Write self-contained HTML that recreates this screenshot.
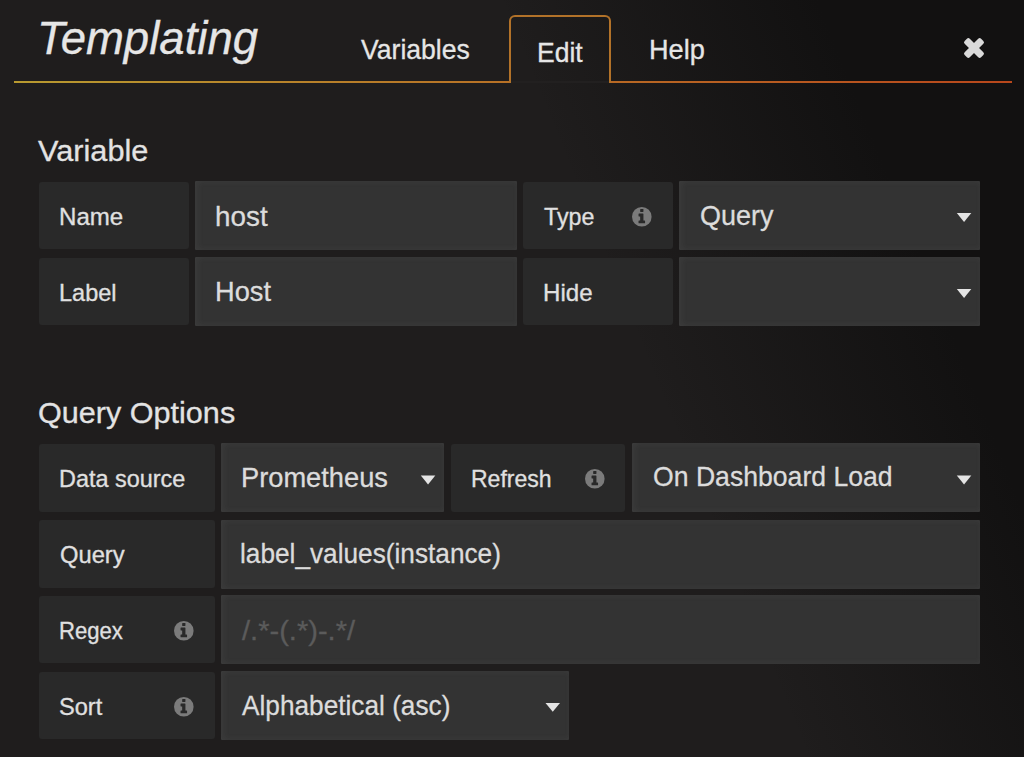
<!DOCTYPE html>
<html lang="en">
<head>
<meta charset="utf-8">
<title>Templating</title>
<style>
html,body{margin:0;padding:0;}
body{width:1024px;height:757px;overflow:hidden;position:relative;background-color:#1f1d1d;
 background-image:linear-gradient(68deg, rgba(18,17,17,0) 60.5%, rgba(18,17,17,1) 84.5%);
 font-family:"Liberation Sans",sans-serif;}
.t{position:absolute;white-space:nowrap;transform-origin:0 0;margin:0;padding:0;font-weight:400;-webkit-text-stroke:0.3px currentColor;}
.lb{position:absolute;background:#292929;border-radius:3px;}
.in{position:absolute;background:#333333;border-radius:1px;box-shadow:inset 2px 0 6px 0 rgba(150,150,150,0.10);}
.hl{position:absolute;left:13.5px;top:81px;width:998.5px;height:2px;background:linear-gradient(to right,#b89a30 0%,#b8481c 99%,#b8481c 100%);}
.tab{position:absolute;left:509px;top:15px;width:98px;height:66px;border:2px solid #b27229;border-bottom:0;border-radius:6px 6px 0 0;}
.tabc{position:absolute;left:511px;top:81px;width:98px;height:2px;background:#222020;}
svg{position:absolute;overflow:visible;}
</style>
</head>
<body>
<div class="hl"></div>
<div class="tab"></div>
<div class="tabc"></div>
<div class="lb" style="left:39px;top:182px;width:150px;height:67.3px"></div>
<div class="lb" style="left:39px;top:258px;width:150px;height:67.3px"></div>
<div class="lb" style="left:523.3px;top:182px;width:149.7px;height:67.3px"></div>
<div class="lb" style="left:523.3px;top:258px;width:149.7px;height:67.3px"></div>
<div class="lb" style="left:39px;top:444px;width:175.5px;height:67.5px"></div>
<div class="lb" style="left:450.7px;top:444px;width:174.7px;height:67.5px"></div>
<div class="lb" style="left:39px;top:520px;width:175.5px;height:67.6px"></div>
<div class="lb" style="left:39px;top:596px;width:175.5px;height:67.4px"></div>
<div class="lb" style="left:39px;top:672px;width:175.5px;height:67px"></div>
<div class="in" style="left:195px;top:181px;width:322px;height:69px"></div>
<div class="in" style="left:195px;top:257px;width:322px;height:69px"></div>
<div class="in" style="left:679px;top:181px;width:301px;height:69px"></div>
<div class="in" style="left:679px;top:257px;width:301px;height:69px"></div>
<div class="in" style="left:221px;top:443.4px;width:223px;height:69px"></div>
<div class="in" style="left:631.8px;top:443.4px;width:348.2px;height:69px"></div>
<div class="in" style="left:221px;top:519.5px;width:759px;height:69px"></div>
<div class="in" style="left:221px;top:595.3px;width:759px;height:68.7px"></div>
<div class="in" style="left:221px;top:670.8px;width:347.7px;height:68.8px"></div>
<svg width="1" height="1" style="left:0;top:0"><polygon points="956.8,213.1 971.3,213.1 964.05,222" fill="#e4e4e4"/></svg>
<svg width="1" height="1" style="left:0;top:0"><polygon points="956.8,289.1 971.3,289.1 964.05,298" fill="#e4e4e4"/></svg>
<svg width="1" height="1" style="left:0;top:0"><polygon points="420.8,475.5 435.3,475.5 428.05,484.4" fill="#e4e4e4"/></svg>
<svg width="1" height="1" style="left:0;top:0"><polygon points="956.8,475.5 971.3,475.5 964.05,484.4" fill="#e4e4e4"/></svg>
<svg width="1" height="1" style="left:0;top:0"><polygon points="545.5,702.9 560,702.9 552.75,711.8" fill="#e4e4e4"/></svg>
<svg width="1" height="1" style="left:632.2px;top:207px"><g transform="scale(0.01276)"><circle cx="768" cy="768" r="768" fill="#7b7b7b"/><g transform="translate(0,-128)"><rect x="640" y="288" width="256" height="224" rx="32" fill="#292929"/><path d="M544 640h320q32 0 32 32v512h96q32 0 32 32v160q0 32-32 32h-448q-32 0-32-32v-160q0-32 32-32h96v-320h-96q-32 0-32-32v-160q0-32 32-32z" fill="#292929"/></g></g></svg>
<svg width="1" height="1" style="left:585.4px;top:468.7px"><g transform="scale(0.01276)"><circle cx="768" cy="768" r="768" fill="#7b7b7b"/><g transform="translate(0,-128)"><rect x="640" y="288" width="256" height="224" rx="32" fill="#292929"/><path d="M544 640h320q32 0 32 32v512h96q32 0 32 32v160q0 32-32 32h-448q-32 0-32-32v-160q0-32 32-32h96v-320h-96q-32 0-32-32v-160q0-32 32-32z" fill="#292929"/></g></g></svg>
<svg width="1" height="1" style="left:173.9px;top:621.2px"><g transform="scale(0.01276)"><circle cx="768" cy="768" r="768" fill="#7b7b7b"/><g transform="translate(0,-128)"><rect x="640" y="288" width="256" height="224" rx="32" fill="#292929"/><path d="M544 640h320q32 0 32 32v512h96q32 0 32 32v160q0 32-32 32h-448q-32 0-32-32v-160q0-32 32-32h96v-320h-96q-32 0-32-32v-160q0-32 32-32z" fill="#292929"/></g></g></svg>
<svg width="1" height="1" style="left:173.9px;top:696.6px"><g transform="scale(0.01276)"><circle cx="768" cy="768" r="768" fill="#7b7b7b"/><g transform="translate(0,-128)"><rect x="640" y="288" width="256" height="224" rx="32" fill="#292929"/><path d="M544 640h320q32 0 32 32v512h96q32 0 32 32v160q0 32-32 32h-448q-32 0-32-32v-160q0-32 32-32h96v-320h-96q-32 0-32-32v-160q0-32 32-32z" fill="#292929"/></g></g></svg>
<svg width="1" height="1" style="left:974.3px;top:47.9px"><g transform="rotate(45)" fill="#dadada"><rect x="-11.6" y="-3.6" width="23.2" height="7.2" rx="2"/><rect x="-3.6" y="-11.6" width="7.2" height="23.2" rx="2"/></g></svg>
<div class="t" style="left:36.71px;top:12.2px;font-size:46.2px;line-height:52px;color:#e6e6e6;transform:scaleX(0.9857);font-style:italic;">Templating</div>
<div class="t" style="left:360.78px;top:34.4px;font-size:27.6px;line-height:31px;color:#e6e6e6;transform:scaleX(0.9633);">Variables</div>
<div class="t" style="left:537.11px;top:36.5px;font-size:27.6px;line-height:31px;color:#e6e6e6;transform:scaleX(0.9607);">Edit</div>
<div class="t" style="left:649px;top:34.4px;font-size:27.6px;line-height:31px;color:#e6e6e6;transform:scaleX(0.9845);">Help</div>
<div class="t" style="left:38.3px;top:133px;font-size:30.4px;line-height:34px;color:#e3e3e3;transform:scaleX(1.0102);">Variable</div>
<div class="t" style="left:37.91px;top:394.8px;font-size:30.4px;line-height:34px;color:#e3e3e3;transform:scaleX(1.0063);">Query Options</div>
<div class="t" style="left:58.79px;top:204.1px;font-size:23.7px;line-height:26px;color:#e0e0e0;transform:scaleX(1.0169);">Name</div>
<div class="t" style="left:58.54px;top:279.9px;font-size:23.7px;line-height:26px;color:#e0e0e0;transform:scaleX(0.9919);">Label</div>
<div class="t" style="left:543.63px;top:203.8px;font-size:23.7px;line-height:26px;color:#e0e0e0;transform:scaleX(0.9795);">Type</div>
<div class="t" style="left:543.04px;top:279.9px;font-size:23.7px;line-height:26px;color:#e0e0e0;transform:scaleX(1.0164);">Hide</div>
<div class="t" style="left:59.19px;top:466.3px;font-size:23.7px;line-height:26px;color:#e0e0e0;transform:scaleX(0.9881);">Data source</div>
<div class="t" style="left:471.03px;top:466.2px;font-size:23.7px;line-height:26px;color:#e0e0e0;transform:scaleX(0.9713);">Refresh</div>
<div class="t" style="left:59.67px;top:542px;font-size:23.7px;line-height:26px;color:#e0e0e0;transform:scaleX(1.0015);">Query</div>
<div class="t" style="left:58.67px;top:618.4px;font-size:23.7px;line-height:26px;color:#e0e0e0;transform:scaleX(0.9324);">Regex</div>
<div class="t" style="left:58.97px;top:694px;font-size:23.7px;line-height:26px;color:#e0e0e0;transform:scaleX(0.9949);">Sort</div>
<div class="t" style="left:215.08px;top:201px;font-size:27.6px;line-height:31px;color:#dcdcdc;transform:scaleX(1.0087);">host</div>
<div class="t" style="left:214.92px;top:276.3px;font-size:27.6px;line-height:31px;color:#dcdcdc;transform:scaleX(0.9865);">Host</div>
<div class="t" style="left:699.79px;top:199.7px;font-size:27.6px;line-height:31px;color:#dcdcdc;transform:scaleX(0.9768);">Query</div>
<div class="t" style="left:240.51px;top:461.5px;font-size:27.6px;line-height:31px;color:#dcdcdc;transform:scaleX(0.9876);">Prometheus</div>
<div class="t" style="left:653.02px;top:460.8px;font-size:27.6px;line-height:31px;color:#dcdcdc;transform:scaleX(0.9643);">On Dashboard Load</div>
<div class="t" style="left:240.25px;top:538px;font-size:27.6px;line-height:31px;color:#dcdcdc;transform:scaleX(0.9502);">label_values(instance)</div>
<div class="t" style="left:241.8px;top:614.5px;font-size:27.6px;line-height:31px;color:#5b5b5b;transform:scaleX(1.0534);">/.*-(.*)-.*/</div>
<div class="t" style="left:241.7px;top:689.5px;font-size:27.6px;line-height:31px;color:#dcdcdc;transform:scaleX(0.9502);">Alphabetical (asc)</div>
</body>
</html>
